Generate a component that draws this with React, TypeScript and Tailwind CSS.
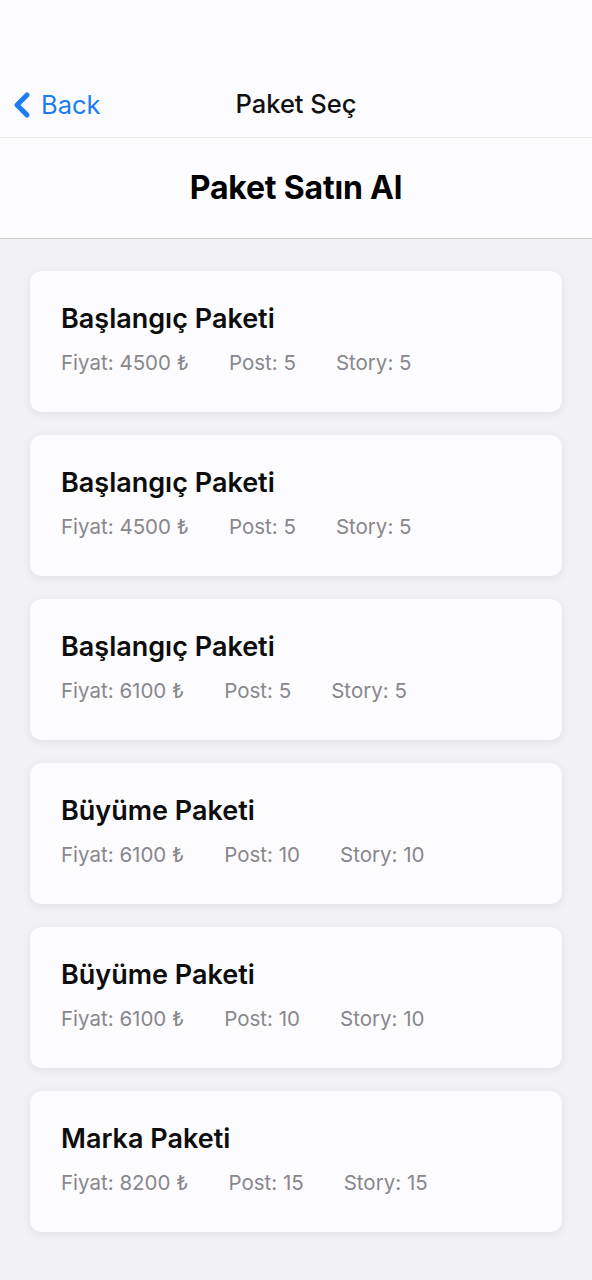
import { ChevronLeft } from 'lucide-react'

const paketler = [
  { ad: 'Başlangıç Paketi', fiyat: '4500', post: 5, story: 5 },
  { ad: 'Başlangıç Paketi', fiyat: '4500', post: 5, story: 5 },
  { ad: 'Başlangıç Paketi', fiyat: '6100', post: 5, story: 5 },
  { ad: 'Büyüme Paketi', fiyat: '6100', post: 10, story: 10 },
  { ad: 'Büyüme Paketi', fiyat: '6100', post: 10, story: 10 },
  { ad: 'Marka Paketi', fiyat: '8200', post: 15, story: 15 },
]

export default function App() {
  return (
    <main className="min-h-[1280px] bg-[#f2f1f5] font-['Inter',sans-serif]">
      {/* NAV */}
      <div className="bg-[#fcfbfe] pt-[72px]">
        <div className="relative h-[66px] flex items-center border-b border-[#ebeaee]">
          <button className="flex items-center pl-[2px] text-[#1c7cf4]">
            <ChevronLeft size={40} strokeWidth={3} />
            <span className="text-[25.5px] leading-none -ml-[1px]">Back</span>
          </button>
          <span className="absolute left-1/2 -translate-x-1/2 -mt-[1px] text-[25.5px] font-medium text-[#111]">Paket Seç</span>
        </div>
        <div className="h-[101px] flex items-center justify-center border-b border-[#c9c8cc]">
          <h1 className="text-[32px] font-bold text-black tracking-[-0.2px]">Paket Satın Al</h1>
        </div>
      </div>

      {/* LİSTE */}
      <div className="px-[30px] pt-[32px] pb-10 flex flex-col gap-[23px]">
        {paketler.map((p, i) => (
          <div key={i} className="h-[141px] bg-[#fcfbfe] rounded-[12px] shadow-[0_2px_10px_rgba(0,0,0,0.08)] px-[31px] pt-[31px]">
            <h3 className="text-[27px] font-semibold text-[#0d0d0d] leading-[34px]">{p.ad}</h3>
            <div className="mt-[17px] flex gap-[40px] text-[20.5px] text-[#88878c] leading-none">
              <span>Fiyat: {p.fiyat} ₺</span>
              <span>Post: {p.post}</span>
              <span>Story: {p.story}</span>
            </div>
          </div>
        ))}
      </div>
    </main>
  )
}
